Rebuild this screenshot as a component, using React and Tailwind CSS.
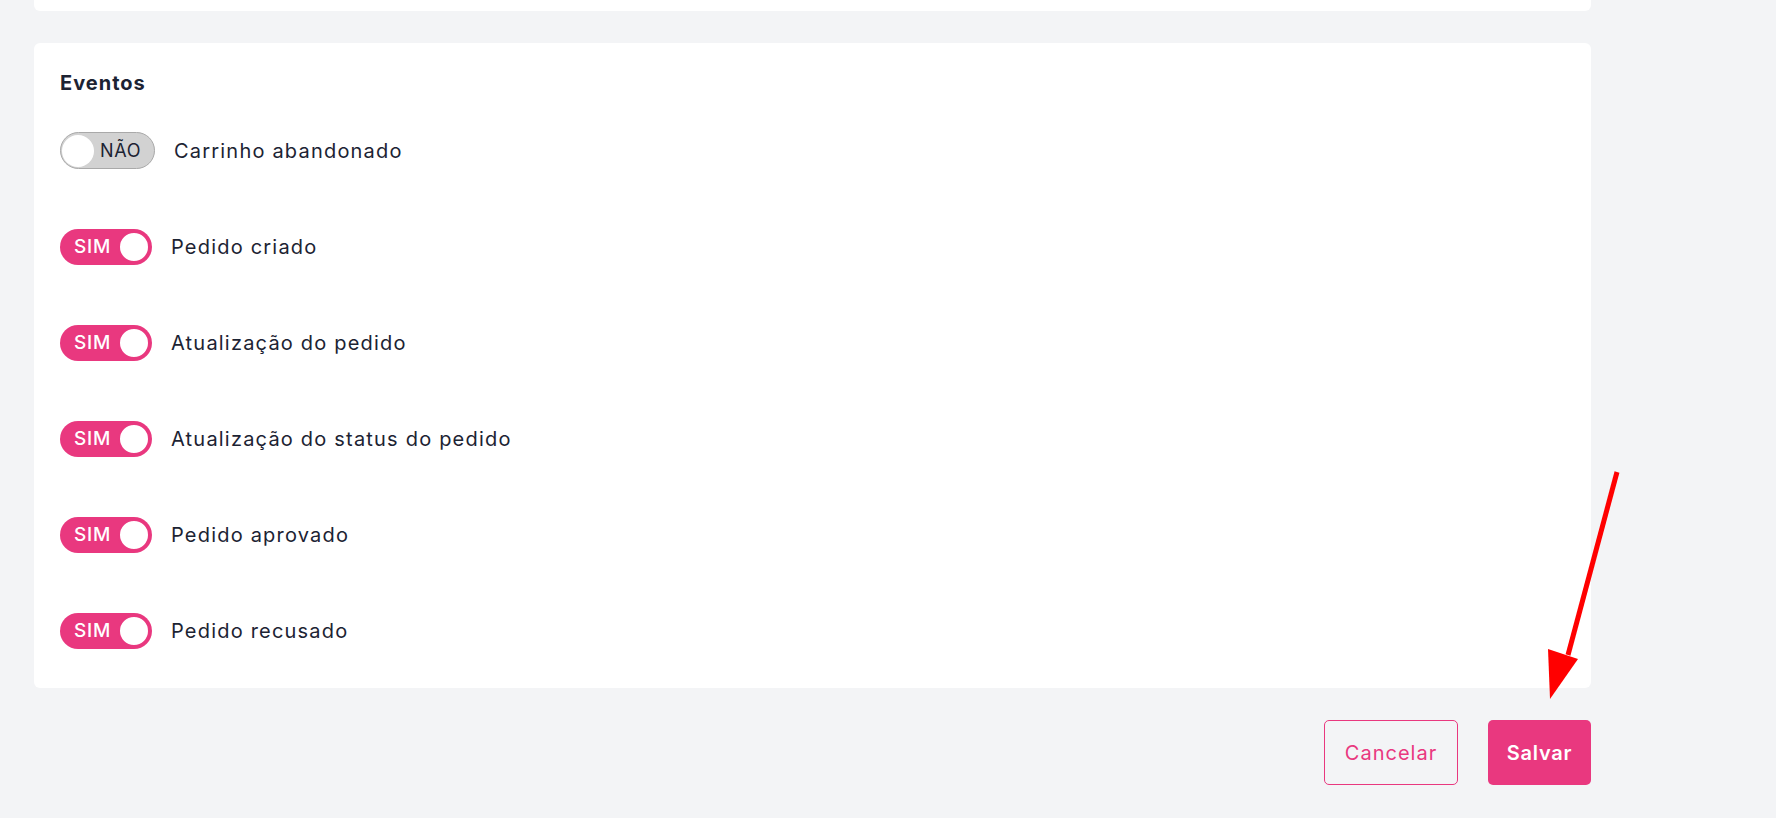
import { useState } from 'react';

const events = [
  { label: 'Carrinho abandonado', on: false },
  { label: 'Pedido criado', on: true },
  { label: 'Atualização do pedido', on: true },
  { label: 'Atualização do status do pedido', on: true },
  { label: 'Pedido aprovado', on: true },
  { label: 'Pedido recusado', on: true },
];

const Toggle = ({ on, onClick }) =>
  on ? (
    <button
      onClick={onClick}
      className="flex items-center justify-between w-[92px] h-[36px] rounded-full bg-[#e9387f] pl-[14px] pr-[2px]"
    >
      <span className="text-white text-[19px] font-medium tracking-[0.8px]">SIM</span>
      <span className="w-[32px] h-[32px] rounded-full bg-white border-2 border-[#e9387f]" />
    </button>
  ) : (
    <button
      onClick={onClick}
      className="flex items-center justify-between w-[95px] h-[37px] rounded-full bg-[#d2d2d2] border-[1.5px] border-[#a9a9a9] pl-[1px] pr-[13px]"
    >
      <span className="w-[32px] h-[32px] rounded-full bg-white" />
      <span className="text-[#1c2333] text-[18px] tracking-[0.6px]">NÃO</span>
    </button>
  );

export default function App() {
  const [state, setState] = useState(events.map((e) => e.on));

  const flip = (i) => setState(state.map((v, j) => (j === i ? !v : v)));

  return (
    <div className="relative min-h-[818px] bg-[#f3f4f6] font-['Inter',sans-serif] text-[#1c2333]">
      <div className="w-[1591px] pl-[34px]">
        <div className="h-[11px] bg-white rounded-b-md" />

        <div className="mt-[32px] bg-white rounded-md pl-[26px] pt-[26px] pb-[39px]">
          <h2 className="text-[20px] leading-[28px] font-bold tracking-[1px]">Eventos</h2>

          <div className="mt-[35px] flex flex-col gap-[60px]">
            {events.map((e, i) => (
              <div key={e.label} className="flex items-center gap-[19px]">
                <Toggle on={state[i]} onClick={() => flip(i)} />
                <span className="text-[20px] tracking-[1.2px]">{e.label}</span>
              </div>
            ))}
          </div>
        </div>

        <div className="mt-[32px] flex justify-end gap-[30px]">
          <button className="w-[134px] h-[65px] rounded-[5px] border border-[#e9387f] text-[#e9387f] text-[20px] tracking-[1px]">
            Cancelar
          </button>
          <button className="w-[103px] h-[65px] rounded-[5px] bg-[#e9387f] text-white text-[20px] font-semibold tracking-[0.8px]">
            Salvar
          </button>
        </div>
      </div>

      <svg className="absolute left-[1540px] top-[465px]" width="90" height="240" viewBox="0 0 90 240">
        <line x1="77" y1="7" x2="28" y2="190" stroke="#ff0000" strokeWidth="5" />
        <polygon points="8,184 38,194 10,234" fill="#ff0000" />
      </svg>
    </div>
  );
}
